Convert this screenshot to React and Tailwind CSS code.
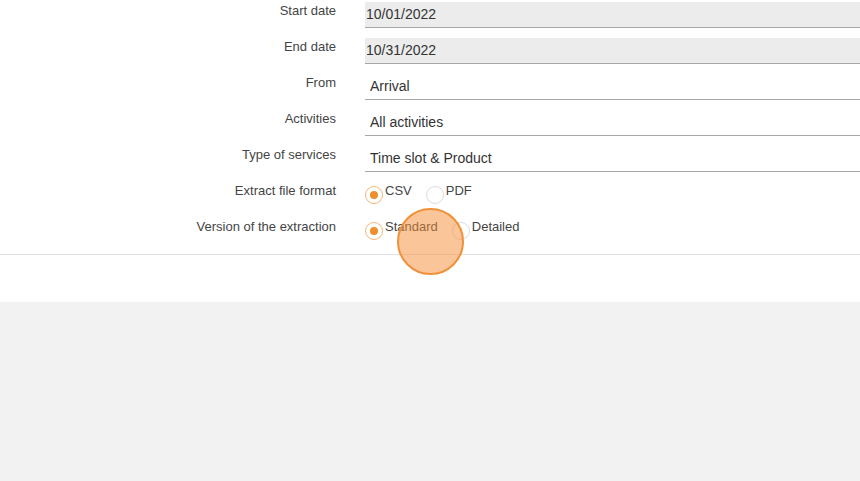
import React from 'react';

const fields = [
  { label: 'Start date', value: '10/01/2022', disabled: true },
  { label: 'End date', value: '10/31/2022', disabled: true },
  { label: 'From', value: 'Arrival' },
  { label: 'Activities', value: 'All activities' },
  { label: 'Type of services', value: 'Time slot & Product' },
];

const Radio = ({ checked, label }) => (
  <label className="flex items-start mr-[14px]">
    <span
      className={`mt-[4px] w-[18px] h-[18px] rounded-full border flex items-center justify-center shrink-0 ${
        checked ? 'border-[#f2b978]' : 'border-[#dcdcdc]'
      }`}
    >
      {checked && <span className="w-[8px] h-[8px] rounded-full bg-[#ee8f2c]" />}
    </span>
    <span className="ml-[2px] pt-[1px] text-[13px] leading-[16px] text-[#444]">{label}</span>
  </label>
);

const Row = ({ label, children }) => (
  <div className="flex items-start h-[36px]">
    <div className="w-[336px] text-right text-[13px] leading-[16px] text-[#444] pt-[1px]">{label}</div>
    <div className="ml-[29px] flex-1">{children}</div>
  </div>
);

export default function App() {
  return (
    <div className="relative w-[860px] h-[481px] bg-[#f2f2f2] overflow-hidden" style={{ fontFamily: '"Liberation Sans", Arial, sans-serif' }}>
      <div className="bg-white h-[302px]">
        <div className="pt-[2px] h-[255px] border-b border-[#e3e3e3]">
          {fields.map((f) => (
            <Row key={f.label} label={f.label}>
              <div
                className={`h-[26px] border-b border-[#a6a6a6] flex items-center text-[14px] text-[#333] ${
                  f.disabled ? 'bg-[#ececec] pl-[1px]' : 'pl-[5px]'
                }`}
              >
                {f.value}
              </div>
            </Row>
          ))}
          <Row label="Extract file format">
            <div className="flex">
              <Radio checked label="CSV" />
              <Radio label="PDF" />
            </div>
          </Row>
          <Row label="Version of the extraction">
            <div className="flex">
              <Radio checked label="Standard" />
              <Radio label="Detailed" />
            </div>
          </Row>
        </div>
      </div>
      <div className="absolute left-[397px] top-[208px] w-[67px] h-[67px] rounded-full bg-[#f58c33]/50 border-2 border-[#f0913a]" />
    </div>
  );
}
